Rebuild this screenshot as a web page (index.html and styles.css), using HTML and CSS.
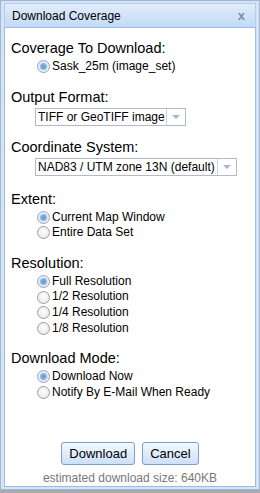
FILE: index.html
```html
<!DOCTYPE html>
<html>
<head>
    <title>Download Coverage</title>
    <link rel="stylesheet" href="styles.css">
</head>
<body>
<div class="dialog">
    <div class="dialog-header">
        <span class="dialog-title">Download Coverage</span>
        <span class="dialog-close">x</span>
    </div>
    <div class="dialog-body">
        <div class="section">
            <div class="section-label">Coverage To Download:</div>
            <label class="option"><input type="radio" name="coverage" checked> Sask_25m (image_set)</label>
        </div>
        <div class="section section-combo">
            <div class="section-label">Output Format:</div>
            <div class="combo combo-format">
                <span class="combo-text">TIFF or GeoTIFF image</span>
                <span class="combo-arrow"></span>
            </div>
        </div>
        <div class="section section-combo section-crs">
            <div class="section-label">Coordinate System:</div>
            <div class="combo combo-crs">
                <span class="combo-text">NAD83 / UTM zone 13N (default)</span>
                <span class="combo-arrow"></span>
            </div>
        </div>
        <div class="section">
            <div class="section-label">Extent:</div>
            <label class="option"><input type="radio" name="extent" checked> Current Map Window</label>
            <label class="option"><input type="radio" name="extent"> Entire Data Set</label>
        </div>
        <div class="section">
            <div class="section-label">Resolution:</div>
            <label class="option"><input type="radio" name="res" checked> Full Resolution</label>
            <label class="option"><input type="radio" name="res"> 1/2 Resolution</label>
            <label class="option"><input type="radio" name="res"> 1/4 Resolution</label>
            <label class="option"><input type="radio" name="res"> 1/8 Resolution</label>
        </div>
        <div class="section">
            <div class="section-label">Download Mode:</div>
            <label class="option"><input type="radio" name="mode" checked> Download Now</label>
            <label class="option"><input type="radio" name="mode"> Notify By E-Mail When Ready</label>
        </div>
        <div class="dialog-footer">
            <div class="buttons">
                <button class="btn">Download</button>
                <button class="btn">Cancel</button>
            </div>
            <div class="estimate">estimated download size: 640KB</div>
        </div>
    </div>
</div>
</body>
</html>
```

FILE: styles.css
```css
:root {
    --frame-color: #9fb8d8;
    --header-top: #e1ecfb;
    --header-bottom: #c3daf6;
    --border-color: #99bbe8;
    --text-color: #000000;
    --muted-color: #777777;
}
* {
    box-sizing: border-box;
}
body {
    margin: 0;
    padding: 0;
    background-color: #a9a9a9;
    font-family: "Liberation Sans", Arial, sans-serif;
    color: var(--text-color);
}
.dialog {
    width: 260px;
    height: 490px;
    display: flex;
    flex-direction: column;
    background-color: #d4e3f6;
    border: 1px solid var(--frame-color);
    padding: 2px 3px 2px 3px;
}
.dialog-header {
    height: 25px;
    display: flex;
    align-items: center;
    justify-content: space-between;
    padding: 0 10px 0 7px;
    background: linear-gradient(to bottom, var(--header-top), var(--header-bottom));
    border: 1px solid #b6cdea;
    border-bottom: 1px solid var(--border-color);
}
.dialog-title {
    font-size: 12px;
}
.dialog-close {
    font-size: 13px;
    font-weight: bold;
    color: #7d8ea6;
}
.dialog-body {
    flex: 1;
    display: flex;
    flex-direction: column;
    background-color: #ffffff;
    border: 1px solid var(--border-color);
    border-top: none;
    padding: 11px 6px 0 6px;
}
.section {
    margin-bottom: 13px;
}
.section-combo {
    margin-bottom: 12px;
}
.section-crs {
    margin-bottom: 14px;
}
.section-label {
    font-size: 14.5px;
    line-height: 18px;
    margin-bottom: 2px;
}
.option {
    display: flex;
    align-items: center;
    font-size: 12px;
    line-height: 15.6px;
    padding-left: 26px;
}
.option input {
    appearance: none;
    -webkit-appearance: none;
    width: 13px;
    height: 13px;
    margin: 0 2px 0 0;
    border: 1px solid #a0a0a0;
    border-radius: 50%;
    background: radial-gradient(circle at 50% 40%, #ffffff, #e2e2e2);
}
.option input:checked {
    border-color: #8ea4bd;
    background: radial-gradient(circle, #5f95cc 0, #8fb8e0 3px, #dfe9f4 4px, #f4f7fa 6px);
}
.combo {
    display: flex;
    height: 18px;
    margin: 2px 0 0 24px;
    border: 1px solid #b5b8c8;
    background-color: #ffffff;
    font-size: 12px;
}
.combo-format {
    width: 151px;
}
.combo-crs {
    width: 202px;
}
.combo-text {
    flex: 1;
    padding-left: 2px;
    line-height: 16px;
    white-space: nowrap;
    overflow: hidden;
}
.combo-arrow {
    width: 19px;
    border-left: 1px solid #cfd6e0;
    display: flex;
    align-items: center;
    justify-content: center;
}
.combo-arrow::after {
    content: "";
    border-left: 4px solid transparent;
    border-right: 4px solid transparent;
    border-top: 4px solid #9fb6d6;
}
.dialog-footer {
    margin-top: auto;
    display: flex;
    flex-direction: column;
    align-items: center;
    padding-bottom: 1px;
}
.buttons {
    display: flex;
    gap: 7px;
}
.btn {
    height: 23px;
    padding: 0 7px;
    font-family: "Liberation Sans", Arial, sans-serif;
    font-size: 13px;
    color: #000000;
    border: 1px solid #7d9fc6;
    border-radius: 3px;
    background: linear-gradient(to bottom, #f3f8fe, #cde0f6);
    cursor: pointer;
}
.estimate {
    margin-top: 6px;
    font-size: 12px;
    line-height: 14px;
    color: var(--muted-color);
}
```
